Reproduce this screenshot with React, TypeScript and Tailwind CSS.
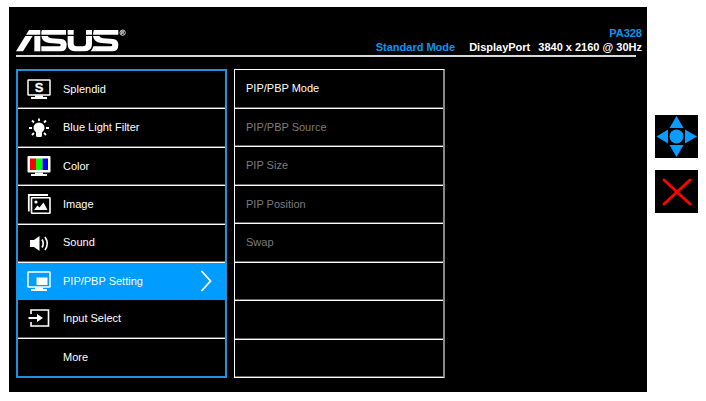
import type { ReactNode } from "react";

function AsusLogo() {
  return (
    <svg role="img" aria-label="ASUS" viewBox="48 87 333 69" className="mb-[2px] block h-[23px] w-[111px]">
      <g fill="#fff">
        <path d="M87 90H121V104H78Z" />
        <path d="M76 108H98L69 154H48Z" />
        <path d="M103 108H121V154H103Z" />
        <path d="M126 90H198V104H124Q122 97 126 90Z" />
        <path d="M124 108H143Q145 114 154 115L184 117Q200 119 200 134Q200 154 182 154H124V139H176Q182 139 182 135Q182 131 176 131L148 129Q127 127 124 108Z" />
        <path d="M203 90H221V104H203Z M258 90H276V104H258Z" />
        <path d="M203 108H221V130Q221 139 230 139H249Q258 139 258 130V108H276V132Q276 154 254 154H225Q203 154 203 132Z" />
        <path d="M282 90H355V104H279Q279 96 282 90Z" />
        <path d="M279 108H298Q300 114 309 115L339 117Q355 119 355 134Q355 154 337 154H272Q278 148 280 139H331Q337 139 337 135Q337 131 331 131L303 129Q282 127 279 108Z" />
      </g>
      <g fill="none" stroke="#fff" strokeWidth="2.4">
        <circle cx="368" cy="98" r="8" />
        <path d="M365 103V94H369Q371 94 371 96T369 99H365M368 99L372 103" />
      </g>
    </svg>
  );
}

function Icon({ children }: { children: ReactNode }) {
  return (
    <svg aria-hidden="true" viewBox="0 0 24 20" className="h-5 w-6 shrink-0">
      {children}
    </svg>
  );
}

const stand = <path d="M8 16.500H16V18H20V20H4V18H8Z" fill="#fff" />;

const splendidIcon = (
  <Icon>
    <rect x="1" y="1" width="22" height="15" rx="0.5" fill="none" stroke="#fff" strokeWidth="1.500" />
    {stand}
    <text x="12" y="13" textAnchor="middle" fill="#fff" stroke="#fff" strokeWidth="0.300" fontSize="13" fontWeight="700">S</text>
  </Icon>
);

const bulbIcon = (
  <Icon>
    <path d="M12 4.500a5.500 5.500 0 0 0-5.500 5.500c0 2 1.600 3.200 2.500 4.200V17.500q0 1.500 1.500 1.500h3q1.500 0 1.500-1.500v-3.300C15.900 13.200 17.500 12 17.500 10a5.500 5.500 0 0 0-5.500-5.500Z" fill="#fff" />
    <path d="M12 0.500V3M5 2.500L7 4.500M19 2.500L17 4.500M2 10H5M19 10H22M5 17L7 15M19 17L17 15" stroke="#fff" strokeWidth="1.800" />
  </Icon>
);

const colorIcon = (
  <Icon>
    <rect x="0.500" y="0" width="23" height="16.500" rx="1" fill="#fff" />
    <path d="M3 2.500H9V14H3Z" fill="#f00" />
    <path d="M9 2.500H15.500V14H9Z" fill="#0f0" />
    <path d="M15.500 2.500H21V14H15.500Z" fill="#00f" />
    {stand}
  </Icon>
);

const imageIcon = (
  <Icon>
    <path d="M1.800 17.500V1H21" fill="none" stroke="#fff" strokeWidth="1.800" />
    <rect x="4.500" y="3.700" width="18.500" height="15.500" rx="0.500" fill="none" stroke="#fff" strokeWidth="1.600" />
    <circle cx="9" cy="8" r="1.600" fill="#fff" />
    <path d="M7 16L10.500 11.500L12.500 13.500L16.500 8.500L20.500 16Z" fill="#fff" />
  </Icon>
);

const soundIcon = (
  <Icon>
    <path d="M3 7H7L12.500 3V18L7 14H3Z" fill="#fff" />
    <path d="M15 6.500Q17.500 10.500 15 14.500M18 4Q22.500 10.500 18 17" fill="none" stroke="#fff" strokeWidth="1.700" />
  </Icon>
);

const pipIcon = (
  <Icon>
    <rect x="1" y="1" width="22" height="15" rx="0.500" fill="none" stroke="#fff" strokeWidth="1.500" />
    <rect x="9.500" y="6.500" width="11" height="7.500" fill="#fff" />
    {stand}
  </Icon>
);

const inputIcon = (
  <Icon>
    <path d="M4 6V2H21.500V18H4V14" fill="none" stroke="#fff" strokeWidth="1.600" />
    <path d="M1.500 9H10V6L16 10L10 14V11H1.500Z" fill="#fff" />
  </Icon>
);

const menu = [
  { label: "Splendid", icon: splendidIcon },
  { label: "Blue Light Filter", icon: bulbIcon },
  { label: "Color", icon: colorIcon },
  { label: "Image", icon: imageIcon },
  { label: "Sound", icon: soundIcon },
  { label: "PIP/PBP Setting", icon: pipIcon, active: true },
  { label: "Input Select", icon: inputIcon },
  { label: "More", icon: <Icon>{null}</Icon> },
];

const options = ["PIP/PBP Mode", "PIP/PBP Source", "PIP Size", "PIP Position", "Swap", "", "", ""];

export default function App() {
  return (
    <div className="flex items-start gap-2 bg-white pt-[7px] pr-2 pb-[9px] pl-[9px] font-['Liberation_Sans',Arial,sans-serif] text-[11px]">
      <main className="min-w-0 flex-1 bg-black pt-[19px] pb-[14px] pl-[7px] text-white">
        <header className="flex items-end justify-between pr-[5px] pb-px">
          <AsusLogo />
          <div className="text-right font-bold leading-[14px]">
            <p className="text-[#0c95ec]">PA328</p>
            <p className="flex">
              <span className="mr-[14px] text-[#0c95ec]">Standard Mode</span>
              <span className="mr-2">DisplayPort</span>
              <span>3840 x 2160 @ 30Hz</span>
            </p>
          </div>
        </header>
        <div className="mr-[11px] h-[2px] bg-[#d8d8d8]" />

        <div className="mt-3 mr-[202px] flex gap-[7px]">
          <nav className="flex h-[309px] w-1/2 flex-col border-2 border-[#2390dc]">
            {menu.map((item) => (
              <button
                key={item.label}
                type="button"
                className={
                  "flex w-full flex-1 items-center gap-3 pr-[13px] pb-px pl-[9px] text-left " +
                  (item.active
                    ? "bg-[#009cff]"
                    : "border-b border-white shadow-[inset_0_-1px_#666] last:border-b-0 last:shadow-none")
                }
              >
                {item.icon}
                <span className="flex-1">{item.label}</span>
                {item.active && (
                  <svg aria-hidden="true" viewBox="0 0 12 22" className="h-[22px] w-3">
                    <path d="M1.500 1L10.500 11L1.500 21" fill="none" stroke="#fff" strokeWidth="1.800" />
                  </svg>
                )}
              </button>
            ))}
          </nav>
          <div className="flex h-[309px] w-1/2 flex-col border border-r-2 border-white border-r-[#888]">
            {options.map((label, i) => (
              <button
                key={i}
                type="button"
                disabled={i > 0}
                aria-label={label || "Empty"}
                className="w-full flex-1 border-b border-white pb-px pl-[11px] text-left shadow-[inset_0_-1px_#666] last:border-b-0 disabled:text-[#7c7c7c]"
              >
                {label}
              </button>
            ))}
          </div>
        </div>
      </main>

      <aside className="mt-[108px] flex flex-col gap-3">
        <button type="button" aria-label="Navigate" className="bg-black">
          <svg aria-hidden="true" viewBox="0 0 43 43" className="h-[43px] w-[43px]">
            <g fill="#0c9bff">
              <circle cx="21.500" cy="21.500" r="7" />
              <path d="M21.500 1L28.500 13H14.500ZM21.500 42L28.500 30H14.500ZM1.500 21.500L13 14.500V28.500ZM42 21.500L30 14.500V28.500Z" />
            </g>
          </svg>
        </button>
        <button type="button" aria-label="Close" className="bg-black">
          <svg aria-hidden="true" viewBox="0 0 43 43" className="h-[43px] w-[43px]">
            <path d="M9 10L35 34M35 10L9 34" stroke="#f00" strokeWidth="3" strokeLinecap="round" />
          </svg>
        </button>
      </aside>
    </div>
  );
}
